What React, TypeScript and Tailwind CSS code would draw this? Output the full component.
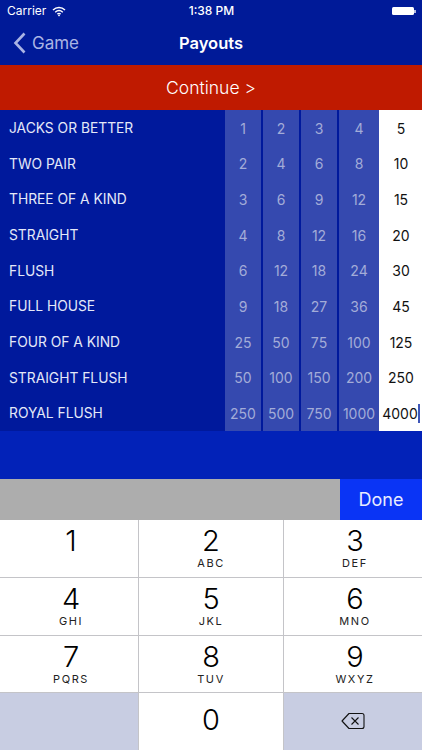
const rows = [
  { name: 'JACKS OR BETTER', pays: [1, 2, 3, 4, 5] },
  { name: 'TWO PAIR', pays: [2, 4, 6, 8, 10] },
  { name: 'THREE OF A KIND', pays: [3, 6, 9, 12, 15] },
  { name: 'STRAIGHT', pays: [4, 8, 12, 16, 20] },
  { name: 'FLUSH', pays: [6, 12, 18, 24, 30] },
  { name: 'FULL HOUSE', pays: [9, 18, 27, 36, 45] },
  { name: 'FOUR OF A KIND', pays: [25, 50, 75, 100, 125] },
  { name: 'STRAIGHT FLUSH', pays: [50, 100, 150, 200, 250] },
  { name: 'ROYAL FLUSH', pays: [250, 500, 750, 1000, 4000] },
];

const keys = [
  ['1', ''],
  ['2', 'ABC'],
  ['3', 'DEF'],
  ['4', 'GHI'],
  ['5', 'JKL'],
  ['6', 'MNO'],
  ['7', 'PQRS'],
  ['8', 'TUV'],
  ['9', 'WXYZ'],
];

function Key({ num, letters, middle }: { num: string; letters: string; middle: boolean }) {
  return (
    <div className={middle ? 'bg-white flex flex-col items-center pt-[3px] text-black' : 'bg-white flex flex-col items-center pt-[3px] pl-[4px] text-black'}>
      <span className="text-[29px] leading-[35px] font-light">{num}</span>
      <span className="text-[11px] leading-[11px] tracking-[1.6px] text-[#222]">{letters}</span>
    </div>
  );
}

export default function App() {
  return (
    <div className="w-[422px] h-[750px] overflow-hidden flex flex-col bg-[#0222b8] font-['Inter','Liberation_Sans',sans-serif]">
      {/* Status + nav */}
      <div className="h-[65px] bg-[#001a98] text-white shrink-0">
        <div className="h-[21px] flex items-center justify-between pl-[7px] pr-[6px] pt-[1px] text-[12px]">
          <div className="flex items-center gap-[6px] w-[100px]">
            <span>Carrier</span>
            <svg width="14" height="11" viewBox="0 0 14 11" fill="none" stroke="white" strokeWidth="1.5">
              <path d="M1 4C4.5 .8 9.5 .8 13 4" />
              <path d="M3.2 6.2C5.5 4.2 8.5 4.2 10.8 6.2" />
              <path d="M5.4 8.2C6.3 7.5 7.7 7.5 8.6 8.2" />
              <path d="M7 10.6 5.9 9.4C6.5 9 7.5 9 8.1 9.4Z" fill="white" stroke="none" />
            </svg>
          </div>
          <span className="font-medium">1:38 PM</span>
          <div className="w-[100px] flex justify-end items-center">
            <div className="w-[22px] h-[8px] bg-white rounded-[1.5px]" />
            <div className="w-[1.5px] h-[3px] bg-white/70" />
          </div>
        </div>
        <div className="h-[44px] relative flex items-center justify-center">
          <div className="absolute left-[13px] top-[9px] flex items-center gap-[6px] text-[#aab4e4]">
            <svg width="13" height="22" viewBox="0 0 13 22" fill="none" stroke="currentColor" strokeWidth="2.6">
              <path d="M11.5 1.5 2.5 11l9 9.5" />
            </svg>
            <span className="text-[17px] leading-[26px]">Game</span>
          </div>
          <span className="text-[16.5px] font-semibold">Payouts</span>
        </div>
      </div>

      {/* Continue */}
      <div className="h-[45px] shrink-0 bg-[#bf1a00] text-white flex items-center justify-center pt-[1px] text-[17.5px] font-light">
        Continue &gt;
      </div>

      {/* Table */}
      <div className="h-[321px] shrink-0 grid grid-cols-[223px_36px_36px_36px_40px_41px] grid-rows-9 gap-x-[2px] bg-[#00199c]">
        {rows.map((row) => (
          <div key={row.name} className="contents">
            <div className="flex items-center pl-[9px] pt-[1px] text-[13.8px] text-[#e4e8f8]">{row.name}</div>
            {row.pays.slice(0, 4).map((p, i) => (
              <div key={i} className="bg-[#3549af] text-[#a3acd8] text-[14px] pt-[1px] flex items-center justify-center">
                {p}
              </div>
            ))}
            <div className="bg-white text-[#111] text-[14px] pt-[1px] pl-[1px] flex items-center justify-center -ml-[2px]">
              {row.pays[4]}
              {row.pays[4] === 4000 && <span className="w-[2px] h-[19px] bg-[#3f56b8] shrink-0" />}
            </div>
          </div>
        ))}
      </div>

      <div className="flex-1" />

      {/* Accessory bar */}
      <div className="h-[41px] shrink-0 bg-[#adadad] flex justify-end">
        <div className="w-[82px] bg-[#0a34f5] text-[#e8ecff] text-[18px] flex items-center justify-center">Done</div>
      </div>

      {/* Number pad */}
      <div className="h-[230px] shrink-0 grid grid-cols-[138px_144px_1fr] grid-rows-4 gap-[1px] bg-[#c4c4c8]">
        {keys.map(([n, l], i) => (
          <Key key={n} num={n} letters={l} middle={i % 3 === 1} />
        ))}
        <div className="bg-[#c8cde2]" />
        <div className="bg-white flex items-center justify-center pb-[3px] text-[29px] font-light text-black">0</div>
        <div className="bg-[#c8cde2] flex items-center justify-center pb-[1px]">
          <svg width="24" height="18" viewBox="0 0 24 18" fill="none" stroke="#111" strokeWidth="1.1" strokeLinejoin="round">
            <path d="M8 1.5h13a2 2 0 0 1 2 2v11a2 2 0 0 1-2 2H8L1 9z" />
            <path d="M10.5 5.5l7 7M17.5 5.5l-7 7" />
          </svg>
        </div>
      </div>
    </div>
  );
}
